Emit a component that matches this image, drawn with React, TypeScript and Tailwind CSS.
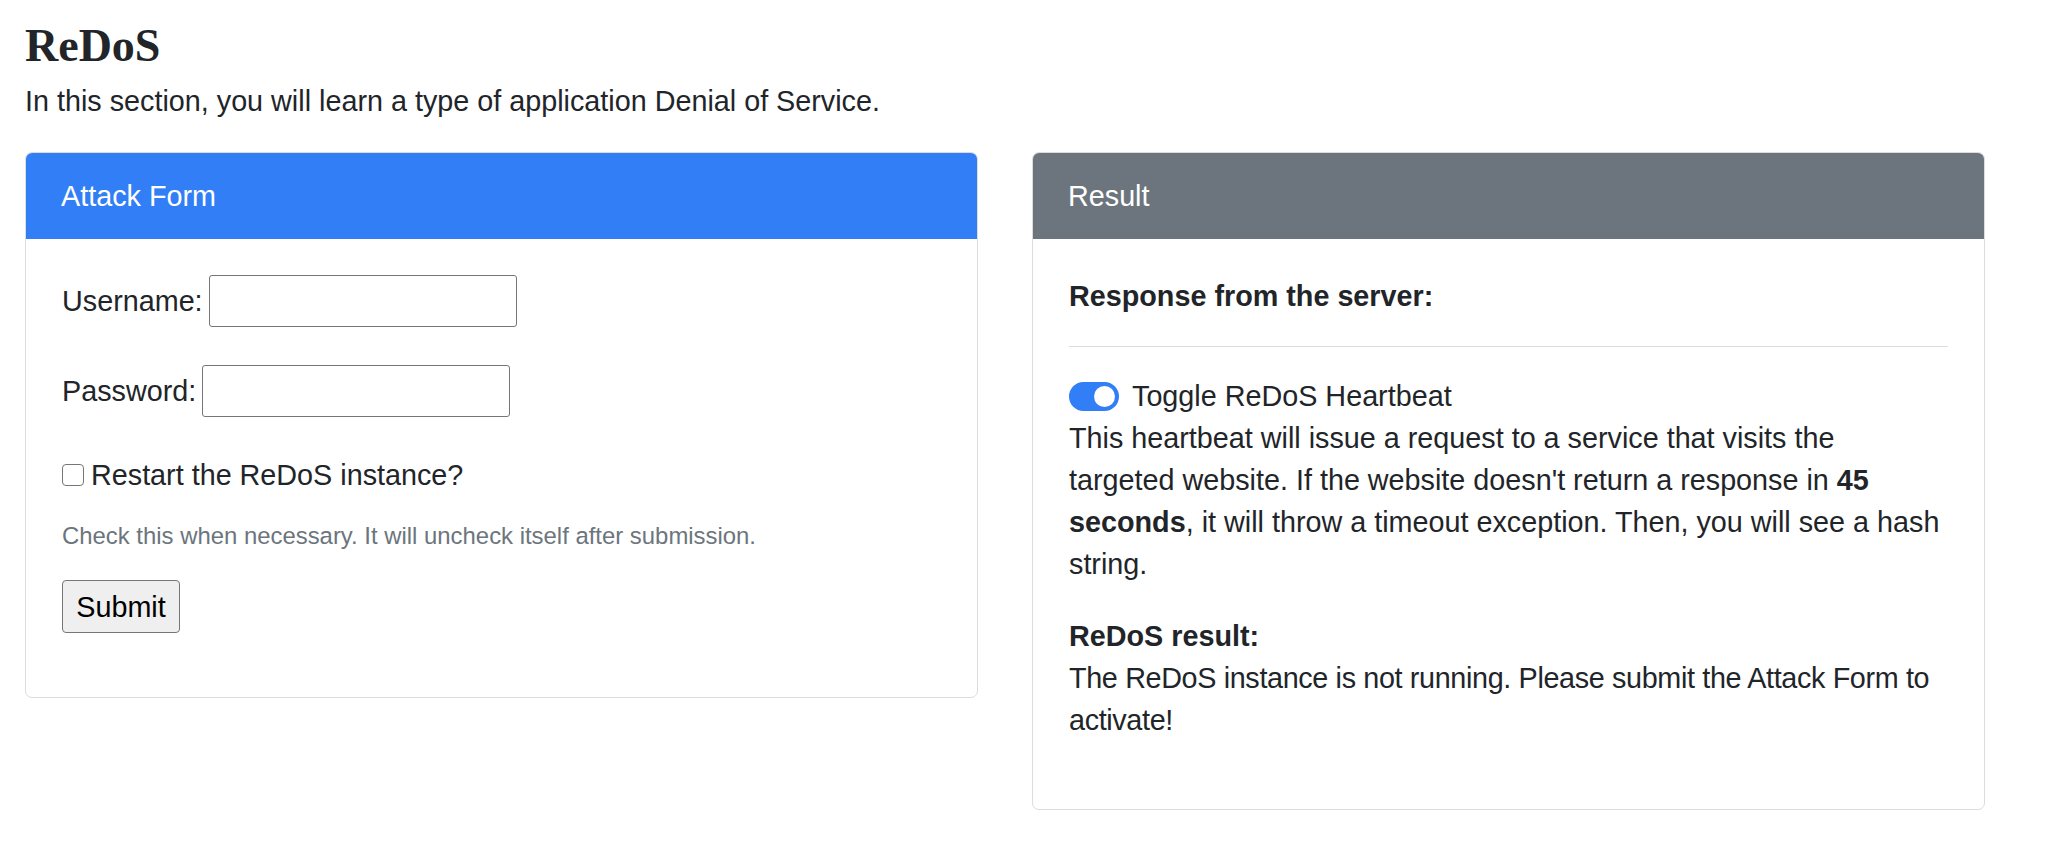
import { useState } from "react";

const sans = "font-['Liberation_Sans',Arial,sans-serif]";

function Card({
  title,
  headerClass,
  children,
}: {
  title: string;
  headerClass: string;
  children: React.ReactNode;
}) {
  return (
    <div className="flex-1 rounded-[7px] border border-[#dcdcdc] overflow-hidden bg-white">
      <div className={`h-[86px] flex items-center px-[35px] text-white ${headerClass}`}>
        {title}
      </div>
      {children}
    </div>
  );
}

export default function App() {
  const [heartbeat, setHeartbeat] = useState(true);
  const [restart, setRestart] = useState(false);

  return (
    <div className={`${sans} text-[28.75px] leading-[42px] text-[#212529] bg-white min-h-screen pl-[25px] pr-[63px] pt-[19px]`}>
      {/* Header */}
      <h1 className="font-['Liberation_Serif',serif] font-bold text-[46px] leading-[54px]">
        ReDoS
      </h1>
      <p className="mt-[7px]">
        In this section, you will learn a type of application Denial of Service.
      </p>

      <div className="flex items-start gap-[54px] mt-[30px]">
        {/* Attack form */}
        <Card title="Attack Form" headerClass="bg-[#317ef6]">
          <form className="px-[36px] pt-[36px] pb-[64px]" onSubmit={(e) => e.preventDefault()}>
            <div className="flex items-center gap-[6px] h-[52px]">
              <label>Username:</label>
              <input
                type="text"
                className="w-[308px] h-[52px] border border-[#767676] rounded-[3px] px-2 outline-none"
              />
            </div>
            <div className="flex items-center gap-[6px] h-[52px] mt-[38px]">
              <label>Password:</label>
              <input
                type="password"
                className="w-[308px] h-[52px] border border-[#767676] rounded-[3px] px-2 outline-none"
              />
            </div>
            <label className="flex items-center gap-[7px] mt-[37px] h-[42px]">
              <input
                type="checkbox"
                checked={restart}
                onChange={() => setRestart(!restart)}
                className="appearance-none w-[22px] h-[22px] border-[1.5px] border-[#767676] rounded-[4px] bg-white"
              />
              <span>Restart the ReDoS instance?</span>
            </label>
            <div className="mt-[21px] text-[23.9px] leading-[37px] text-[#6c757d]">
              Check this when necessary. It will uncheck itself after submission.
            </div>
            <button
              type="submit"
              className="mt-[26px] w-[118px] h-[53px] bg-[#efefef] border border-[#767676] rounded-[4px] text-black"
            >
              Submit
            </button>
          </form>
        </Card>

        {/* Result */}
        <Card title="Result" headerClass="bg-[#6c757d]">
          <div className="px-[36px] pt-[36px] pb-[68px]">
            <div className="font-bold">Response from the server:</div>
            <hr className="mt-[29px] border-0 border-t border-[#dcdcdc]" />
            <div className="flex items-center gap-[13px] mt-[28px] h-[42px]">
              <button
                onClick={() => setHeartbeat(!heartbeat)}
                className={`w-[50px] h-[29px] rounded-full flex items-center px-[4px] ${heartbeat ? "bg-[#317ef6] justify-end" : "bg-white border border-[#bbb] justify-start"}`}
              >
                <span className={`w-[21px] h-[21px] rounded-full ${heartbeat ? "bg-white" : "bg-[#bbb]"}`} />
              </button>
              <span>Toggle ReDoS Heartbeat</span>
            </div>
            <p>
              This heartbeat will issue a request to a service that visits the
              <br />
              targeted website. If the website doesn't return a response in <b>45</b>
              <br />
              <b>seconds</b>, it will throw a timeout exception. Then, you will see a hash
              <br />
              string.
            </p>
            <div className="font-bold mt-[30px]">ReDoS result:</div>
            <p className="tracking-[-0.35px] whitespace-nowrap">
              The ReDoS instance is not running. Please submit the Attack Form to
              <br />
              activate!
            </p>
          </div>
        </Card>
      </div>
    </div>
  );
}
